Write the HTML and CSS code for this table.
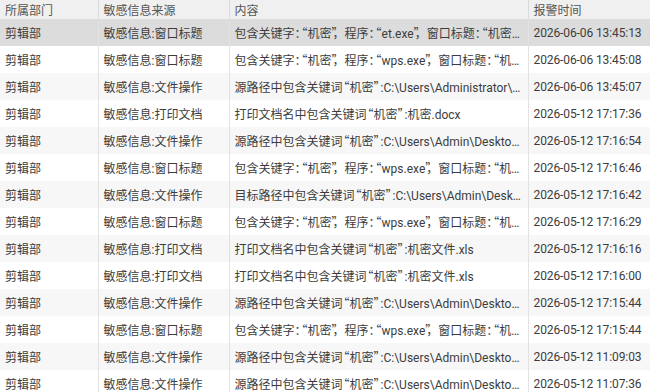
FILE: index.html
```html
<!DOCTYPE html>
<html lang="zh">
<head>
<meta charset="utf-8">
<link rel="stylesheet" href="styles.css">
</head>
<body>
<table class="grid">
  <colgroup>
    <col class="c1"><col class="c2"><col class="c3"><col class="c4">
  </colgroup>
  <thead>
    <tr><th>所属部门</th><th>敏感信息来源</th><th>内容</th><th>报警时间</th></tr>
  </thead>
  <tbody>
    <tr class="sel"><td>剪辑部</td><td>敏感信息:窗口标题</td><td>包含关键字：<span class="qo">“</span>机密<span class="qc">”</span>，程序：<span class="qo">“</span>et.exe<span class="qc">”</span>，窗口标题：<span class="qo">“</span>机密文件.xlsx - WPS表格<span class="qc">”</span></td><td class="time">2026-06-06 13:45:13</td></tr>
    <tr><td>剪辑部</td><td>敏感信息:窗口标题</td><td>包含关键字：<span class="qo">“</span>机密<span class="qc">”</span>，程序：<span class="qo">“</span>wps.exe<span class="qc">”</span>，窗口标题：<span class="qo">“</span>机密.docx - WPS文字<span class="qc">”</span></td><td class="time">2026-06-06 13:45:08</td></tr>
    <tr><td>剪辑部</td><td>敏感信息:文件操作</td><td>源路径中包含关键词<span class="qo">“</span>机密<span class="qc">”</span>:C:\Users\Administrator\Desktop\机密.docx</td><td class="time">2026-06-06 13:45:07</td></tr>
    <tr><td>剪辑部</td><td>敏感信息:打印文档</td><td>打印文档名中包含关键词<span class="qo">“</span>机密<span class="qc">”</span>:机密.docx</td><td class="time">2026-05-12 17:17:36</td></tr>
    <tr><td>剪辑部</td><td>敏感信息:文件操作</td><td>源路径中包含关键词<span class="qo">“</span>机密<span class="qc">”</span>:C:\Users\Admin\Desktop\机密文件.xls</td><td class="time">2026-05-12 17:16:54</td></tr>
    <tr><td>剪辑部</td><td>敏感信息:窗口标题</td><td>包含关键字：<span class="qo">“</span>机密<span class="qc">”</span>，程序：<span class="qo">“</span>wps.exe<span class="qc">”</span>，窗口标题：<span class="qo">“</span>机密文件.xls<span class="qc">”</span></td><td class="time">2026-05-12 17:16:46</td></tr>
    <tr><td>剪辑部</td><td>敏感信息:文件操作</td><td>目标路径中包含关键词<span class="qo">“</span>机密<span class="qc">”</span>:C:\Users\Admin\Desktop\机密文件.xls</td><td class="time">2026-05-12 17:16:42</td></tr>
    <tr><td>剪辑部</td><td>敏感信息:窗口标题</td><td>包含关键字：<span class="qo">“</span>机密<span class="qc">”</span>，程序：<span class="qo">“</span>wps.exe<span class="qc">”</span>，窗口标题：<span class="qo">“</span>机密文件.xls<span class="qc">”</span></td><td class="time">2026-05-12 17:16:29</td></tr>
    <tr><td>剪辑部</td><td>敏感信息:打印文档</td><td>打印文档名中包含关键词<span class="qo">“</span>机密<span class="qc">”</span>:机密文件.xls</td><td class="time">2026-05-12 17:16:16</td></tr>
    <tr><td>剪辑部</td><td>敏感信息:打印文档</td><td>打印文档名中包含关键词<span class="qo">“</span>机密<span class="qc">”</span>:机密文件.xls</td><td class="time">2026-05-12 17:16:00</td></tr>
    <tr><td>剪辑部</td><td>敏感信息:文件操作</td><td>源路径中包含关键词<span class="qo">“</span>机密<span class="qc">”</span>:C:\Users\Admin\Desktop\机密文件.xls</td><td class="time">2026-05-12 17:15:44</td></tr>
    <tr><td>剪辑部</td><td>敏感信息:窗口标题</td><td>包含关键字：<span class="qo">“</span>机密<span class="qc">”</span>，程序：<span class="qo">“</span>wps.exe<span class="qc">”</span>，窗口标题：<span class="qo">“</span>机密文件.xls<span class="qc">”</span></td><td class="time">2026-05-12 17:15:44</td></tr>
    <tr><td>剪辑部</td><td>敏感信息:文件操作</td><td>源路径中包含关键词<span class="qo">“</span>机密<span class="qc">”</span>:C:\Users\Admin\Desktop\机密.docx</td><td class="time">2026-05-12 11:09:03</td></tr>
    <tr><td>剪辑部</td><td>敏感信息:文件操作</td><td>源路径中包含关键词<span class="qo">“</span>机密<span class="qc">”</span>:C:\Users\Admin\Desktop\机密.docx</td><td class="time">2026-05-12 11:07:36</td></tr>
  </tbody>
</table>
</body>
</html>
```
FILE: styles.css
```css
html, body {
  margin: 0;
  padding: 0;
  background: #ffffff;
  overflow: hidden;
}
body {
  font-family: Roboto, "Noto Sans CJK SC", sans-serif;
  font-size: 12px;
  color: #3c3c3c;
}
.grid {
  width: 650px;
  table-layout: fixed;
  border-collapse: collapse;
}
.c1 { width: 98px; }
.c2 { width: 131px; }
.c3 { width: 299px; }
.c4 { width: 122px; }
.grid th {
  height: 19px;
  padding: 0 5px;
  text-align: left;
  font-weight: normal;
  color: #555555;
  background: #f0f0f0;
  border-right: 1px solid #dadada;
  white-space: nowrap;
  overflow: hidden;
}
.grid td {
  height: 27px;
  padding: 0 5px;
  white-space: nowrap;
  overflow: hidden;
  text-overflow: ellipsis;
  border-right: 1px solid #e2e2e2;
}
.grid td.time {
  padding-right: 0;
  text-overflow: clip;
  letter-spacing: -0.1px;
}
.qo, .qc {
  font-family: "Noto Sans CJK SC", sans-serif;
}
.qo { margin-left: -5px; }
.qc { margin-right: -5px; }
.grid tbody tr:nth-child(odd) td { background: #f7f7f7; }
.grid tbody tr:nth-child(even) td { background: #ffffff; }
.grid tbody tr.sel td { background: #dcdcdc; }
```
